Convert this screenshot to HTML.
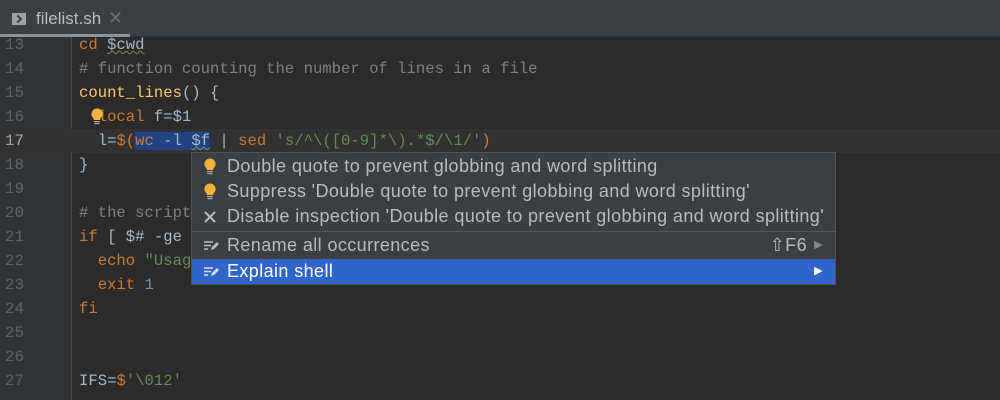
<!DOCTYPE html>
<html style="width:1000px;height:400px;overflow:hidden"><head><meta charset="utf-8"><style>
*{margin:0;padding:0;box-sizing:border-box}
body{width:1000px;height:400px;overflow:hidden;background:#2b2b2b;position:relative;font-family:"Liberation Mono",monospace}
.tabbar{position:absolute;left:0;top:0;width:1000px;height:37px;background:#3c3f41;border-bottom:1px solid #323232}
.tab{position:absolute;left:0;top:0;width:130px;height:37px;font-family:"Liberation Sans",sans-serif;font-size:17px;color:#bbbbbb}
.tab .ic{position:absolute;left:12px;top:13px;width:14px;height:12px;background:#9aa0a6}
.tab .ic:after{content:"";position:absolute;left:3px;top:3px;width:4px;height:4px;border-right:2px solid #3c3f41;border-top:2px solid #3c3f41;transform:rotate(45deg)}
.tab .t{position:absolute;left:36px;top:9px}
.tab .x{position:absolute;left:108px;top:8px;color:#6e6e6e;font-size:18px}
.tab .ul{position:absolute;left:0;top:34px;width:130px;height:3px;background:#8d9296}
.gutter{position:absolute;left:0;top:37px;width:72px;height:363px;background:#313335;border-right:1px solid #4a4a4a}
.cur{position:absolute;left:0;top:129px;width:1000px;height:24px;background:#323232}
.ln{position:absolute;left:0;width:24px;text-align:right;font-size:15.8px;color:#606366;line-height:24px}
.code{position:absolute;left:79px;font-size:15.6px;line-height:24px;color:#a9b7c6;white-space:pre}
.k{color:#cc7832}.c{color:#808080}.f{color:#ffc66d}.s{color:#6a8759}.n{color:#6897bb}
.sel{background:#214283}
.wv{text-decoration:underline wavy #8a8a5a;text-decoration-thickness:1px}
.popup{position:absolute;left:191px;top:152px;width:645px;height:133px;background:#3c3f41;border:1px solid #515151;font-family:"Liberation Sans",sans-serif;font-size:18px;letter-spacing:0.4px;color:#bbbbbb}
.it{position:absolute;left:0;width:643px;height:25px;line-height:25px;padding-left:35px;white-space:nowrap}
.it .ico{position:absolute;left:11px;top:5px}
.hl{background:#2f65ca;color:#fff}
.sep{position:absolute;left:0;top:78px;width:643px;height:1px;background:#555}
.bulb{position:absolute;width:12px;height:17px}
</style></head><body>
<div class="tabbar"><div class="tab"><div class="ic"></div><span class="t">filelist.sh</span><span class="x">✕</span><div class="ul"></div></div></div>
<div class="gutter"></div>
<div class="cur"></div>
<div class="ln" style="top:33px">13</div>
<div class="ln" style="top:57px">14</div>
<div class="ln" style="top:81px">15</div>
<div class="ln" style="top:105px">16</div>
<div class="ln" style="top:129px;color:#a4a3a3">17</div>
<div class="ln" style="top:153px">18</div>
<div class="ln" style="top:177px">19</div>
<div class="ln" style="top:201px">20</div>
<div class="ln" style="top:225px">21</div>
<div class="ln" style="top:249px">22</div>
<div class="ln" style="top:273px">23</div>
<div class="ln" style="top:297px">24</div>
<div class="ln" style="top:321px">25</div>
<div class="ln" style="top:345px">26</div>
<div class="ln" style="top:369px">27</div>
<div class="code" style="top:33px"><span class="k">cd</span> <span class="wv">$cwd</span>
<span class="c"># function counting the number of lines in a file</span>
<span class="f">count_lines</span>() {
  <span class="k">local</span> f=$1
  l=<span class="k">$(</span><span class="sel"><span class="k">wc</span> -l <span class="wv">$f</span></span> | <span class="k">sed</span> <span class="s">'s/^\([0-9]*\).*$/\1/'</span><span class="k">)</span>
}

<span class="c"># the script</span>
<span class="k">if</span> [ $# -ge
  <span class="k">echo</span> <span class="s">"Usag</span>
  <span class="k">exit</span> <span class="n">1</span>
<span class="k">fi</span>


IFS=<span class="k">$</span><span class="s">'\012'</span></div>
<svg class="bulb" style="left:91px;top:108px" viewBox="0 0 12 17"><path d="M6 0.5a5.5 5.5 0 0 1 3.3 9.9V12H2.7v-1.6A5.5 5.5 0 0 1 6 0.5z" fill="#f4b33a"/><rect x="3" y="13" width="6" height="1.2" fill="#aaa"/><rect x="3.5" y="15" width="5" height="1.2" fill="#aaa"/></svg>
<div class="popup">
<div class="it" style="top:1px"><svg class="ico bulb" style="left:12px;top:4px" viewBox="0 0 12 17"><path d="M6 0.5a5.5 5.5 0 0 1 3.3 9.9V12H2.7v-1.6A5.5 5.5 0 0 1 6 0.5z" fill="#f4b33a"/><rect x="3" y="13" width="6" height="1.2" fill="#aaa"/><rect x="3.5" y="15" width="5" height="1.2" fill="#aaa"/></svg>Double quote to prevent globbing and word splitting</div>
<div class="it" style="top:26px"><svg class="ico bulb" style="left:12px;top:4px" viewBox="0 0 12 17"><path d="M6 0.5a5.5 5.5 0 0 1 3.3 9.9V12H2.7v-1.6A5.5 5.5 0 0 1 6 0.5z" fill="#f4b33a"/><rect x="3" y="13" width="6" height="1.2" fill="#aaa"/><rect x="3.5" y="15" width="5" height="1.2" fill="#aaa"/></svg>Suppress 'Double quote to prevent globbing and word splitting'</div>
<div class="it" style="top:51px"><svg class="ico" style="left:12px;top:7px" width="12" height="12" viewBox="0 0 12 12"><path d="M1 1L11 11M11 1L1 11" stroke="#bbb" stroke-width="2"/></svg>Disable inspection 'Double quote to prevent globbing and word splitting'</div>
<div class="sep"></div>
<div class="it" style="top:80px"><svg class="ico" style="left:11px;top:7px" width="16" height="12" viewBox="0 0 16 12"><path d="M1 2h9M1 5.5h7M1 9h4" stroke="#bbb" stroke-width="1.6"/><path d="M8 10l1-3 5-5 2 2-5 5z" fill="#bbb"/></svg>Rename all occurrences<span style="position:absolute;right:28px">⇧F6</span><span style="position:absolute;right:12px;color:#888;font-size:11px">▶</span></div>
<div class="it hl" style="top:106px"><svg class="ico" style="left:11px;top:7px" width="16" height="12" viewBox="0 0 16 12"><path d="M1 2h9M1 5.5h7M1 9h4" stroke="#ddd" stroke-width="1.6"/><path d="M8 10l1-3 5-5 2 2-5 5z" fill="#ddd"/></svg>Explain shell<span style="position:absolute;right:12px;font-size:11px">▶</span></div>
</div>
</body></html>
